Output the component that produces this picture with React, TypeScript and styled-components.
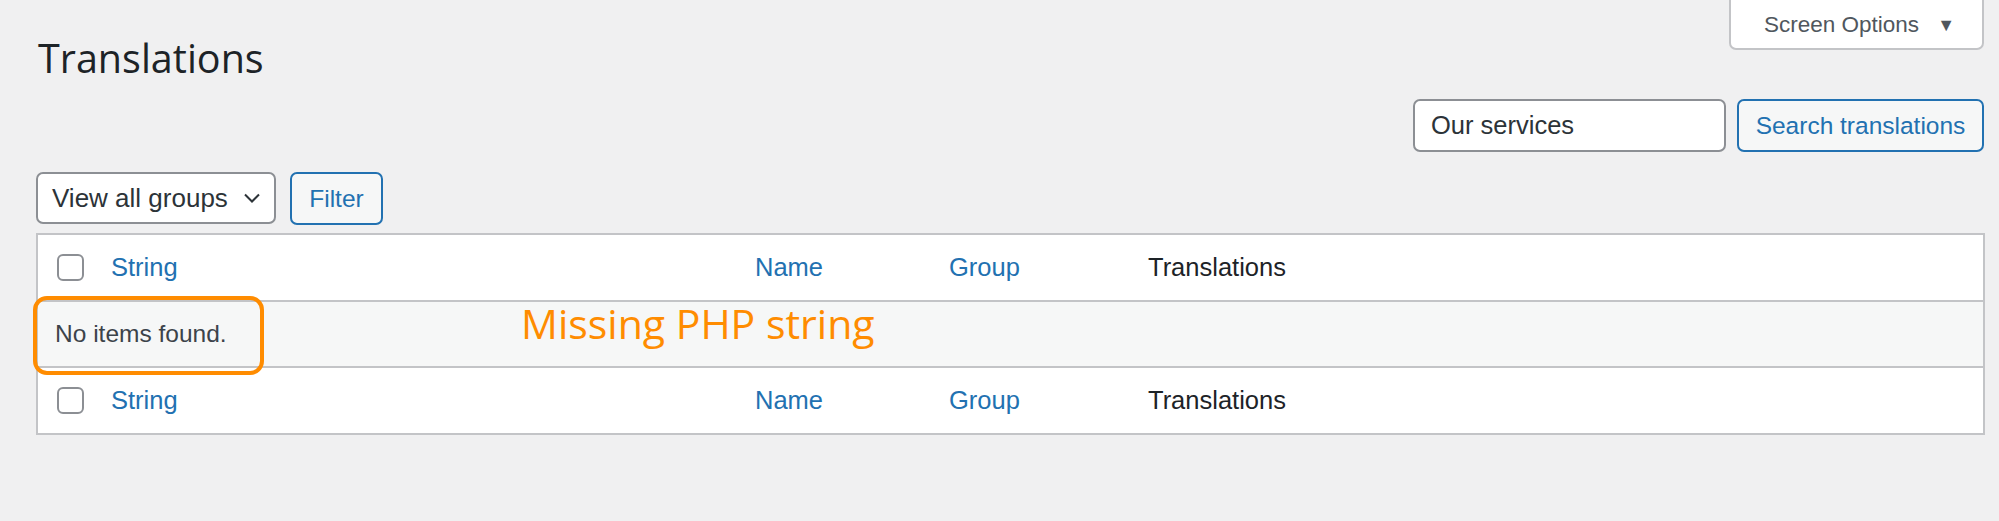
import React from 'react';
import styled, { createGlobalStyle } from 'styled-components';

const GlobalStyle = createGlobalStyle`
  html, body {
    margin: 0;
    padding: 0;
    background: #f0f0f1;
    font-family: "Liberation Sans", Arial, sans-serif;
    color: #1d2327;
  }
`;

const Page = styled.div`
  padding: 0 15px 0 36px;
  width: 1999px;
  box-sizing: border-box;
`;

const HeaderRow = styled.div`
  display: flex;
  justify-content: space-between;
  align-items: flex-start;
  height: 99px;
`;

const Title = styled.h1`
  margin: 32px 0 0 2px;
  font-family: "Open Sans", sans-serif;
  font-weight: 400;
  font-size: 39.5px;
  line-height: 52px;
  color: #1d2327;
`;

const ScreenOptions = styled.button`
  width: 255px;
  height: 52px;
  margin-top: -2px;
  display: flex;
  align-items: center;
  justify-content: center;
  gap: 18px;
  background: #fff;
  border: 2px solid #c3c4c7;
  border-radius: 0 0 7px 7px;
  font-family: "Liberation Sans", Arial, sans-serif;
  font-size: 22.5px;
  color: #50575e;
  padding: 2px 0 0 6px;
`;

const Caret = styled.span`
  font-size: 18px;
  color: #50575e;
`;

const SearchRow = styled.div`
  display: flex;
  justify-content: flex-end;
  gap: 11px;
  height: 73px;
`;

const SearchInput = styled.input`
  width: 313px;
  height: 53px;
  box-sizing: border-box;
  padding: 0 16px;
  border: 2px solid #8c8f94;
  border-radius: 7px;
  background: #fff;
  font-family: "Liberation Sans", Arial, sans-serif;
  font-size: 25.5px;
  color: #2c3338;
`;

const SecondaryButton = styled.button<{ $width: number }>`
  width: ${(p) => p.$width}px;
  height: 53px;
  box-sizing: border-box;
  border: 2px solid #2271b1;
  border-radius: 7px;
  background: #f6f7f7;
  color: #2271b1;
  font-family: "Liberation Sans", Arial, sans-serif;
  font-size: 24.5px;
  padding: 0;
`;

const FilterRow = styled.div`
  display: flex;
  gap: 14px;
  height: 52px;
  margin-bottom: 9px;
`;

const Select = styled.div`
  width: 240px;
  height: 52px;
  box-sizing: border-box;
  border: 2px solid #8c8f94;
  border-radius: 7px;
  background: #fff;
  display: flex;
  align-items: center;
  justify-content: space-between;
  padding: 0 10px 0 14px;
  font-size: 26px;
  color: #2c3338;
`;

const Table = styled.div`
  width: 1949px;
  box-sizing: border-box;
  border: 2px solid #c3c4c7;
  background: #fff;
`;

const Row = styled.div<{ $border?: 'top' | 'bottom' }>`
  display: grid;
  grid-template-columns: 73px 644px 194px 199px 1fr;
  align-items: center;
  height: 65px;
  ${(p) => (p.$border === 'bottom' ? 'border-bottom: 2px solid #c3c4c7;' : '')}
  ${(p) => (p.$border === 'top' ? 'border-top: 2px solid #c3c4c7;' : '')}
`;

const CheckCell = styled.div`
  padding-left: 19px;
  display: flex;
  align-items: center;
`;

const Checkbox = styled.span`
  width: 27px;
  height: 27px;
  box-sizing: border-box;
  border: 2px solid #8c8f94;
  border-radius: 6px;
  background: #fff;
`;

const HeadLink = styled.span`
  color: #2271b1;
  font-size: 25.5px;
`;

const HeadText = styled.span`
  color: #1d2327;
  font-size: 25.5px;
`;

const EmptyRow = styled.div`
  position: relative;
  height: 64px;
  background: #f6f7f7;
  display: flex;
  align-items: center;
  padding-left: 17px;
  font-size: 24.5px;
  color: #3c434a;
`;

const Highlight = styled.div`
  position: absolute;
  left: -5px;
  top: -6px;
  width: 231px;
  height: 79px;
  box-sizing: border-box;
  border: 4px solid #ff8c00;
  border-radius: 14px;
`;

const Note = styled.div`
  position: absolute;
  left: 483px;
  top: -2px;
  font-family: "Open Sans", sans-serif;
  font-size: 41px;
  line-height: 46px;
  color: #ff8c00;
`;

const HeaderCells: React.FC = () => (
  <>
    <CheckCell>
      <Checkbox />
    </CheckCell>
    <HeadLink>String</HeadLink>
    <HeadLink>Name</HeadLink>
    <HeadLink>Group</HeadLink>
    <HeadText>Translations</HeadText>
  </>
);

const App: React.FC = () => {
  return (
    <Page>
      <GlobalStyle />
      <HeaderRow>
        <Title>Translations</Title>
        <ScreenOptions>
          Screen Options <Caret>▼</Caret>
        </ScreenOptions>
      </HeaderRow>
      <SearchRow>
        <SearchInput defaultValue="Our services" />
        <SecondaryButton $width={247}>Search translations</SecondaryButton>
      </SearchRow>
      <FilterRow>
        <Select>
          View all groups
          <svg width="24" height="24" viewBox="0 0 24 24">
            <path d="M5 8.5l7 7 7-7" fill="none" stroke="#2c3338" strokeWidth="2" />
          </svg>
        </Select>
        <SecondaryButton $width={93}>Filter</SecondaryButton>
      </FilterRow>
      <Table>
        <Row $border="bottom">
          <HeaderCells />
        </Row>
        <EmptyRow>
          No items found.
          <Highlight />
          <Note>Missing PHP string</Note>
        </EmptyRow>
        <Row $border="top">
          <HeaderCells />
        </Row>
      </Table>
    </Page>
  );
};

export default App;
